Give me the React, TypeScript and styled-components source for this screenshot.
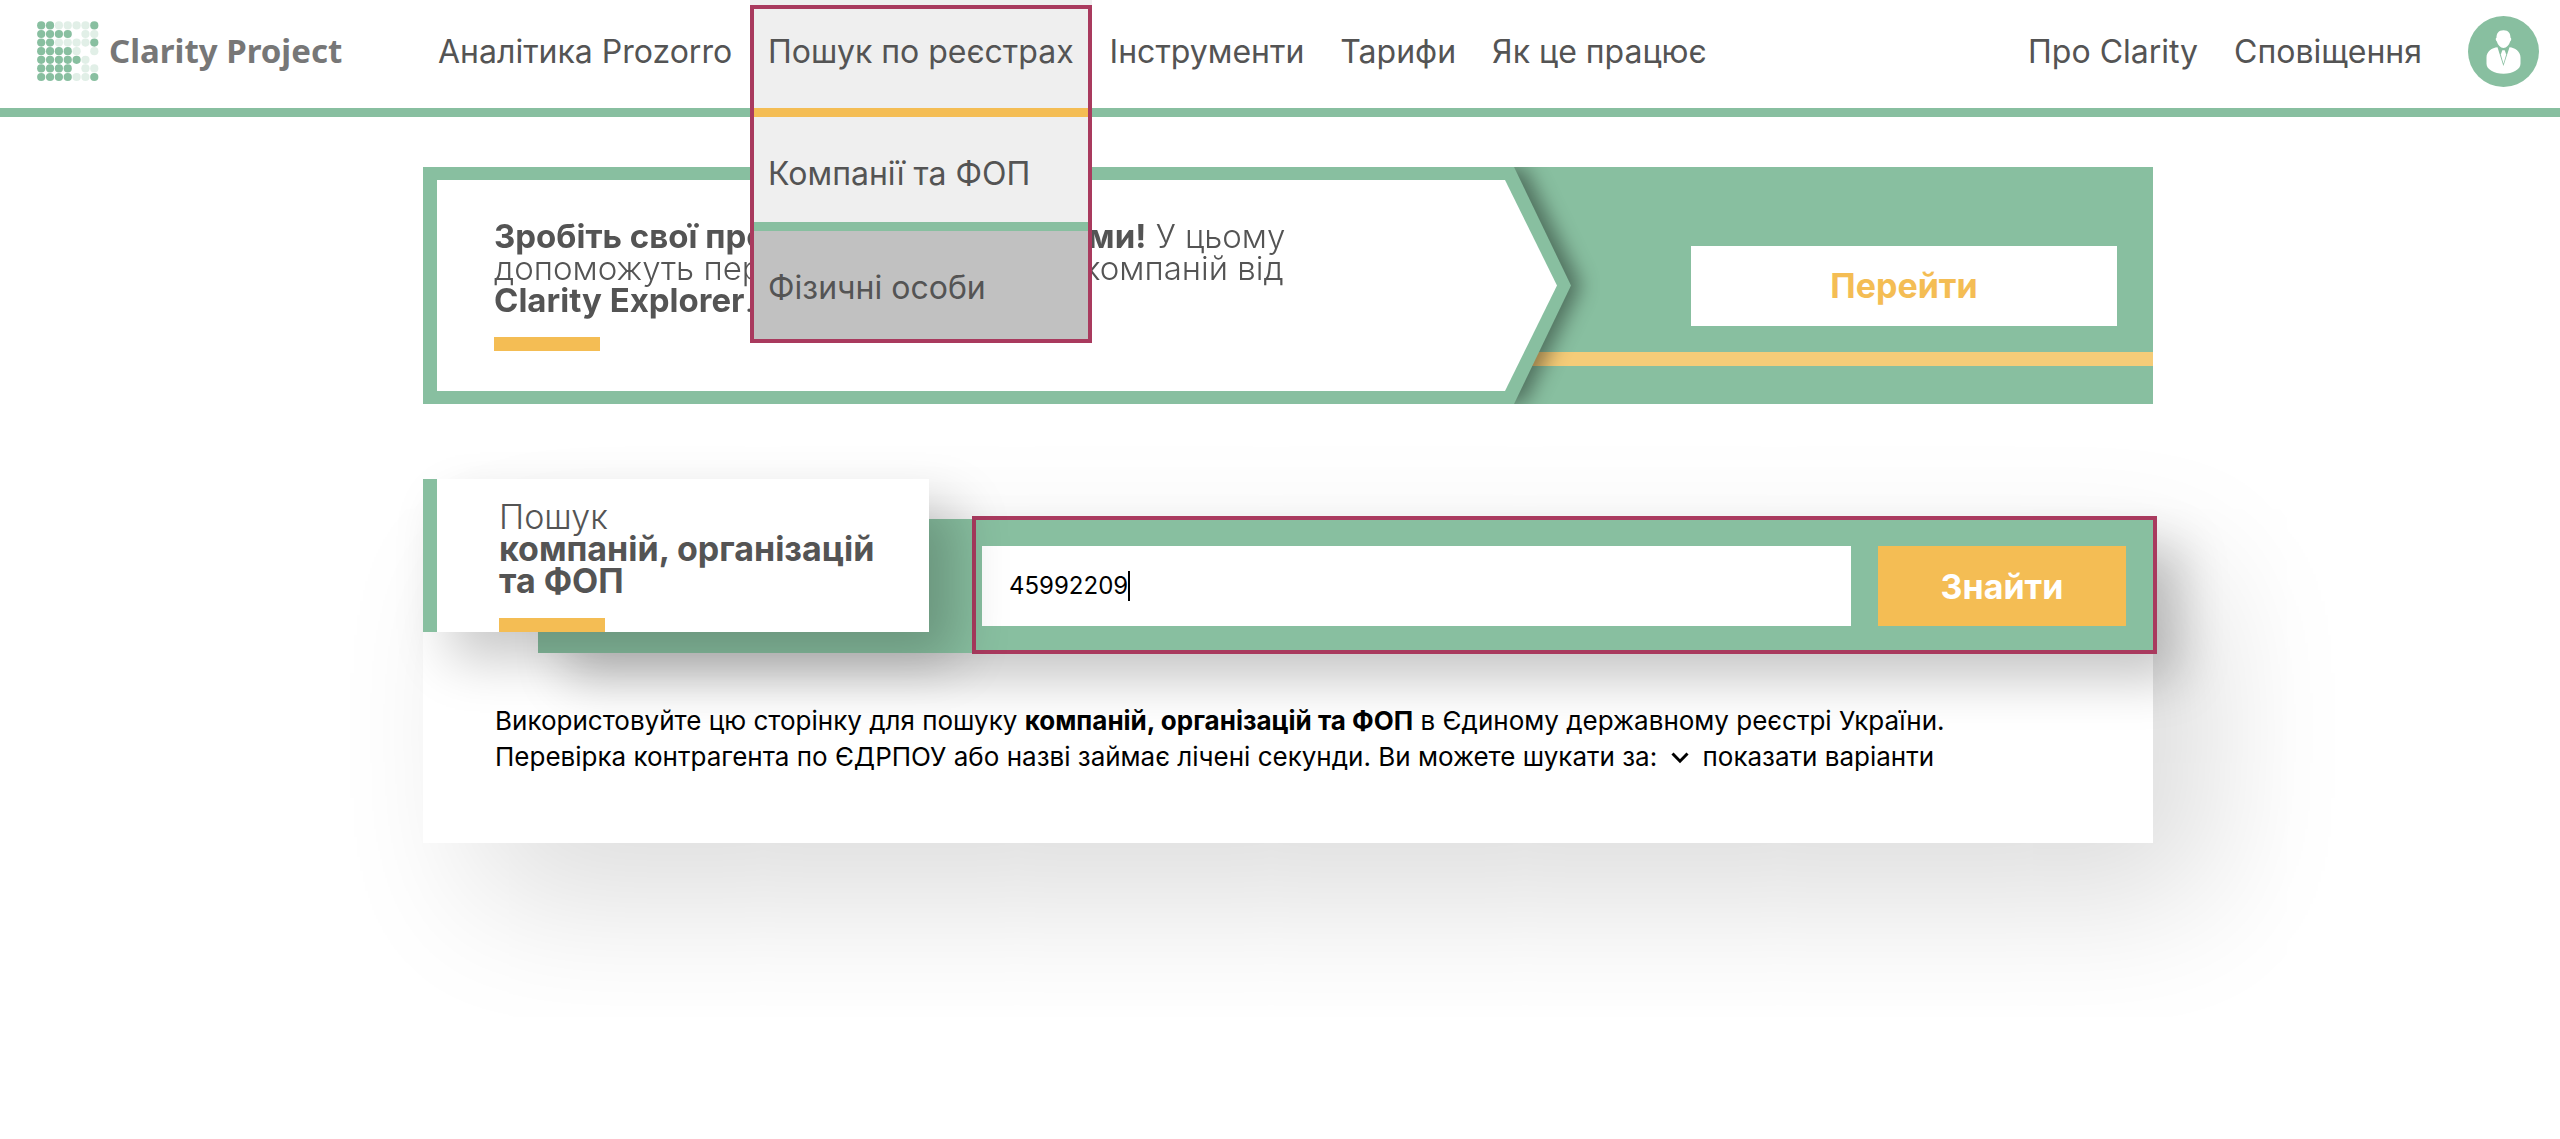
import React, { useState } from "react";
import styled, { createGlobalStyle } from "styled-components";

const c = {
  green: "#88bfa0",
  mint: "#e1efe7",
  yellow: "#f4bd54",
  yellowSoft: "#f5cc78",
  frame: "#a93a5e",
  text: "#545454",
  logo: "#777777",
};

const GlobalStyle = createGlobalStyle`
  * { box-sizing: border-box; }
  body {
    margin: 0;
    min-height: 100vh;
    background: #fff;
    color: #000;
    font-family: Inter, "Noto Sans", sans-serif;
  }
  a { color: inherit; text-decoration: none; }
  button, input { font-family: inherit; border: 0; border-radius: 0; }
`;

const Header = styled.header`
  display: flex;
  min-height: 117px;
  border-bottom: 9px solid ${c.green};
  color: ${c.text};
  font-size: 32px;
  line-height: 36px;
`;

const Brand = styled.a`
  display: flex;
  align-items: center;
  gap: 10px;
  flex: 0 0 420px;
  padding: 0 0 6px 37px;
  color: ${c.logo};
  font-family: "Noto Sans", sans-serif;
  font-weight: 700;
  font-size: 33px;
  white-space: nowrap;
`;

const Nav = styled.nav`
  display: flex;
  margin-right: auto;
`;

const NavItem = styled.div<{ $open?: boolean }>`
  position: relative;
  display: flex;
  background: ${(p) => (p.$open ? "#efefef" : "transparent")};
`;

const NavLink = styled.a`
  display: flex;
  align-items: center;
  padding: 0 18px 4px;
  white-space: nowrap;
`;

const Submenu = styled.div`
  position: absolute;
  z-index: 2;
  top: 100%;
  left: 0;
  right: 0;
  border-top: 9px solid ${c.yellow};
`;

const SubmenuLink = styled.a<{ $hover?: boolean }>`
  display: flex;
  align-items: center;
  height: ${(p) => (p.$hover ? 110 : 114)}px;
  padding: ${(p) => (p.$hover ? "3px" : "9px")} 18px 0;
  background: ${(p) => (p.$hover ? "#c1c1c1" : "#efefef")};
  border-bottom: ${(p) => (p.$hover ? 0 : 9)}px solid ${c.green};
  white-space: nowrap;
`;

const MenuFrame = styled.span`
  position: absolute;
  z-index: 3;
  top: 5px;
  left: 0;
  right: 0;
  height: 338px;
  border: 4px solid ${c.frame};
  pointer-events: none;
`;

const Avatar = styled.a`
  display: flex;
  align-items: center;
  padding: 0 21px 6px 28px;
`;

const Main = styled.main`
  max-width: 1746px;
  margin: 0 auto;
  padding: 50px 0 240px 16px;
`;

const Banner = styled.section`
  display: flex;
  overflow: hidden;
  background: linear-gradient(${c.yellowSoft}, ${c.yellowSoft}) 0 185px / 100% 14px no-repeat ${c.green};
`;

const ArrowShadow = styled.div`
  display: flex;
  flex: 0 1 1148px;
  filter: drop-shadow(10px 0 10px rgba(0, 0, 0, 0.42));
`;

const ArrowEdge = styled.div`
  display: flex;
  flex: 1;
  padding: 13px 14px;
  background: ${c.green};
  clip-path: polygon(0 0, calc(100% - 57px) 0, 100% 50%, calc(100% - 57px) 100%, 0 100%);
`;

const ArrowBody = styled.div`
  flex: 1;
  padding: 40px 52px 40px 57px;
  background: #fff;
  clip-path: polygon(0 0, calc(100% - 52px) 0, 100% 50%, calc(100% - 52px) 100%, 0 100%);
`;

const Lead = styled.p`
  margin: 0;
  color: ${c.text};
  font-size: 33px;
  font-weight: 300;
  line-height: 32px;
  white-space: nowrap;

  b { font-weight: 700; }
`;

const Underline = styled.div`
  width: 106px;
  height: 14px;
  margin-top: 21px;
  background: ${c.yellow};
`;

const BannerAction = styled.div`
  display: flex;
  flex: 1;
  align-items: center;
  padding: 0 36px 0 120px;
`;

const Button = styled.button<{ $solid?: boolean }>`
  flex: ${(p) => (p.$solid ? "0 0 248px" : "1")};
  height: 80px;
  padding: 0;
  background: ${(p) => (p.$solid ? c.yellow : "#fff")};
  color: ${(p) => (p.$solid ? "#fff" : c.yellow)};
  font-size: 34px;
  font-weight: 700;
  cursor: pointer;
`;

const dropShadow = "27px 27px 50px rgba(0, 0, 0, 0.22)";

const Card = styled.section`
  position: relative;
  margin-top: 115px;
  background: #fff;
  box-shadow: 55px 55px 140px rgba(0, 0, 0, 0.14);
`;

const TitleBox = styled.div`
  position: absolute;
  top: -40px;
  left: 0;
  width: 506px;
  padding: 22px 0 0 62px;
  border-left: 14px solid ${c.green};
  background: #fff;
  box-shadow: ${dropShadow};
`;

const Title = styled.h1`
  margin: 0;
  color: ${c.text};
  font-size: 34px;
  font-weight: 300;
  line-height: 32px;

  b { display: block; font-weight: 700; }
`;

const SearchBar = styled.form`
  position: relative;
  display: flex;
  gap: 27px;
  margin-left: 115px;
  padding: 27px 27px 27px 444px;
  background: ${c.green};
  box-shadow: ${dropShadow};
`;

const SearchFrame = styled.span`
  position: absolute;
  top: -3px;
  right: -4px;
  bottom: -1px;
  left: 434px;
  border: 4px solid ${c.frame};
  pointer-events: none;
`;

const Field = styled.label`
  display: flex;
  flex: 1;
  align-items: center;
  padding-left: 27px;
  background: #fff;
  cursor: text;
`;

const Query = styled.input`
  field-sizing: content;
  padding: 0;
  outline: 0;
  background: transparent;
  color: #000;
  font-size: 24px;
  line-height: 36px;
  caret-color: transparent;
`;

const Caret = styled.span`
  width: 2px;
  height: 30px;
  background: #000;
`;

const Description = styled.p`
  margin: 0;
  padding: 50px 72px 68px;
  font-size: 26px;
  line-height: 36px;

  b { font-weight: 700; }
`;

const Toggle = styled.button`
  padding: 0;
  background: none;
  color: inherit;
  font-size: inherit;
  line-height: inherit;
  cursor: pointer;

  svg { margin: 0 14px 2px 6px; vertical-align: middle; }
`;

const dots = ["##oooo#", "####.oo", "##oooo#", "####o.o", "#####o.", "####.oo", "####oo#"];

function LogoMark() {
  return (
    <svg width="62" height="61" viewBox="0 0 62 61" aria-hidden="true">
      {dots.flatMap((row, y) =>
        [...row].map((d, x) =>
          d === "." ? null : (
            <circle key={`${x}-${y}`} cx={4.2 + x * 8.85} cy={4.4 + y * 8.6} r="4.1" fill={d === "#" ? c.green : c.mint} />
          ),
        ),
      )}
    </svg>
  );
}

function AvatarIcon() {
  return (
    <svg width="71" height="71" viewBox="0 0 71 71" aria-hidden="true">
      <circle cx="35.5" cy="35.5" r="35.5" fill={c.green} />
      <path
        fill="#fff"
        d="M35.5 14.3c5.200 0 7 3.200 7 7.400.8.200.9 1.400.5 2.500-.200.700-.5 1.200-.9 1.300-.9 3.500-3.600 6.500-6.600 6.500s-5.700-3-6.600-6.500c-.4-.1-.7-.6-.9-1.300-.4-1.100-.3-2.300.5-2.500 0-4.200 1.800-7.400 7-7.400z"
      />
      <path
        fill="#fff"
        d="M29.500 31.200l5.900 18.800 6.100-18.800c5.500.4 11 4.300 11 10.200v6.300c0 5.600-7.500 10-17 10s-17-4.400-17-10v-6.300c0-5.900 5.500-9.800 11-10.200z"
      />
      <path fill="#fff" d="M34.300 34.200h2.400l1.500 4.200-2.700 9.300-2.700-9.300z" />
    </svg>
  );
}

function ChevronDown() {
  return (
    <svg width="18" height="12" viewBox="0 0 18 12" fill="none" stroke="#000" strokeWidth="3" aria-hidden="true">
      <path d="M1.500 1.500 9 9.200 16.500 1.500" />
    </svg>
  );
}

export default function App() {
  const [query, setQuery] = useState("45992209");

  return (
    <>
      <GlobalStyle />
      <Header>
        <Brand href="#home">
          <LogoMark />
          Clarity Project
        </Brand>
        <Nav>
          <NavItem>
            <NavLink href="#analytics">Аналітика Prozorro</NavLink>
          </NavItem>
          <NavItem $open>
            <NavLink href="#registers">Пошук по реєстрах</NavLink>
            <Submenu>
              <SubmenuLink href="#companies">Компанії та ФОП</SubmenuLink>
              <SubmenuLink href="#persons" $hover>Фізичні особи</SubmenuLink>
            </Submenu>
            <MenuFrame />
          </NavItem>
          <NavItem>
            <NavLink href="#tools">Інструменти</NavLink>
          </NavItem>
          <NavItem>
            <NavLink href="#pricing">Тарифи</NavLink>
          </NavItem>
          <NavItem>
            <NavLink href="#how">Як це працює</NavLink>
          </NavItem>
        </Nav>
        <NavLink href="#about">Про Clarity</NavLink>
        <NavLink href="#alerts">Сповіщення</NavLink>
        <Avatar href="#profile" aria-label="Профіль">
          <AvatarIcon />
        </Avatar>
      </Header>

      <Main>
        <Banner>
          <ArrowShadow>
            <ArrowEdge>
              <ArrowBody>
                <Lead>
                  <b>Зробіть свої продажі прибутковішими!</b> У цьому
                  <br />
                  допоможуть персоналізовані оцінки компаній від
                  <br />
                  <b>Clarity Explorer</b>.
                </Lead>
                <Underline />
              </ArrowBody>
            </ArrowEdge>
          </ArrowShadow>
          <BannerAction>
            <Button type="button">Перейти</Button>
          </BannerAction>
        </Banner>

        <Card>
          <SearchBar onSubmit={(e) => e.preventDefault()}>
            <Field>
              <Query
                type="text"
                aria-label="Пошук компаній"
                value={query}
                onChange={(e) => setQuery(e.target.value)}
              />
              <Caret />
            </Field>
            <Button type="submit" $solid>Знайти</Button>
            <SearchFrame />
          </SearchBar>
          <TitleBox>
            <Title>
              Пошук{" "}
              <b>
                компаній, організацій
                <br />
                та ФОП
              </b>
            </Title>
            <Underline />
          </TitleBox>
          <Description>
            Використовуйте цю сторінку для пошуку <b>компаній, організацій та ФОП</b> в Єдиному державному реєстрі
            України.
            <br />
            Перевірка контрагента по ЄДРПОУ або назві займає лічені секунди. Ви можете шукати за:{" "}
            <Toggle type="button">
              <ChevronDown />
              показати варіанти
            </Toggle>
          </Description>
        </Card>
      </Main>
    </>
  );
}
